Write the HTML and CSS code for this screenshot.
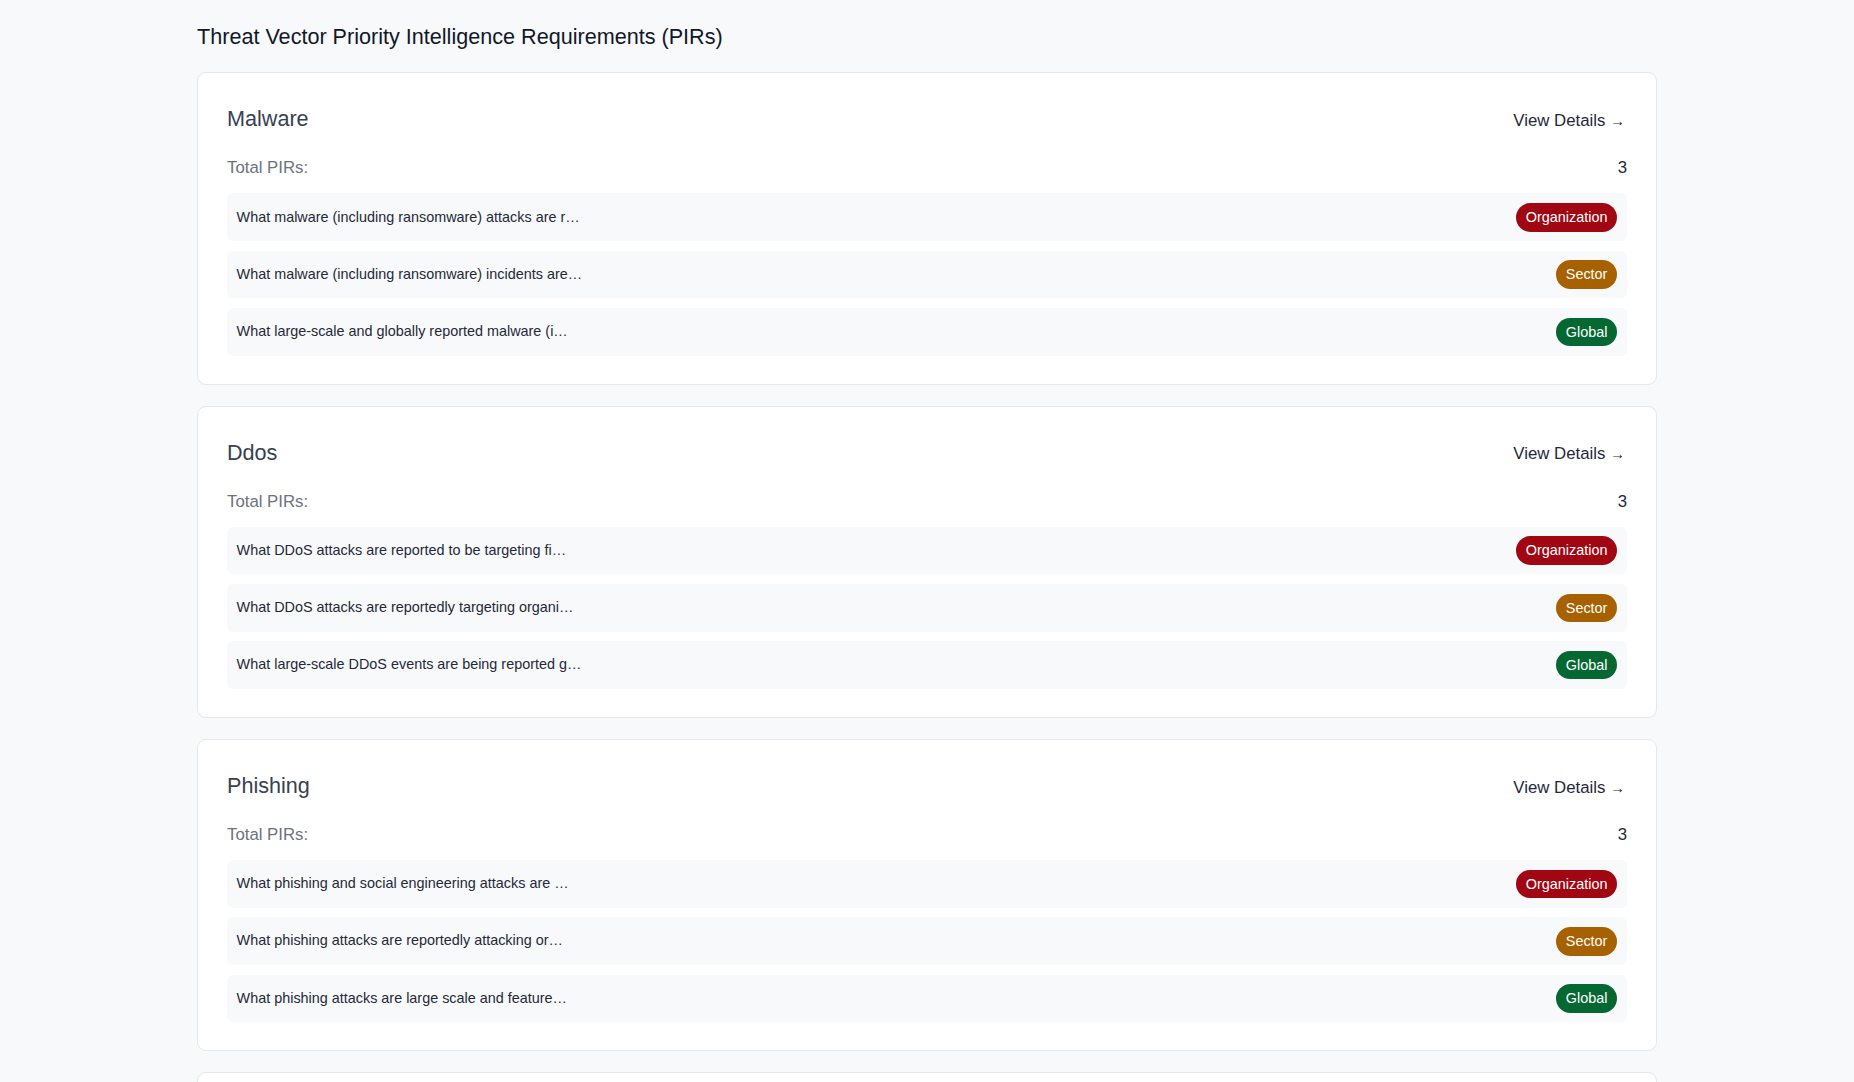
FILE: index.html
```html
<!DOCTYPE html>
<html lang="en">
<head>
  <meta charset="UTF-8" />
  <meta name="viewport" content="width=device-width, initial-scale=1.0"/>
  <title>Threat Vector PIRs</title>
  <link rel="stylesheet" href="styles.css">
</head>
<body>
  <div class="page">
    <h1 class="page-title">Threat Vector Priority Intelligence Requirements (PIRs)</h1>

    <div class="vector-card">
      <div class="vector-header">
        <h2>Malware</h2>
        <a href="#" class="details-link">View Details <span class="arrow">→</span></a>
      </div>
      <div class="total-row">
        <span class="total-label">Total PIRs:</span>
        <span class="total-count">3</span>
      </div>
      <div class="pir-item">
        <span class="pir-text">What malware (including ransomware) attacks are r…</span>
        <span class="badge badge-org">Organization</span>
      </div>
      <div class="pir-item">
        <span class="pir-text">What malware (including ransomware) incidents are…</span>
        <span class="badge badge-sector">Sector</span>
      </div>
      <div class="pir-item">
        <span class="pir-text">What large-scale and globally reported malware (i…</span>
        <span class="badge badge-global">Global</span>
      </div>
    </div>

    <div class="vector-card">
      <div class="vector-header">
        <h2>Ddos</h2>
        <a href="#" class="details-link">View Details <span class="arrow">→</span></a>
      </div>
      <div class="total-row">
        <span class="total-label">Total PIRs:</span>
        <span class="total-count">3</span>
      </div>
      <div class="pir-item">
        <span class="pir-text">What DDoS attacks are reported to be targeting fi…</span>
        <span class="badge badge-org">Organization</span>
      </div>
      <div class="pir-item">
        <span class="pir-text">What DDoS attacks are reportedly targeting organi…</span>
        <span class="badge badge-sector">Sector</span>
      </div>
      <div class="pir-item">
        <span class="pir-text">What large-scale DDoS events are being reported g…</span>
        <span class="badge badge-global">Global</span>
      </div>
    </div>

    <div class="vector-card">
      <div class="vector-header">
        <h2>Phishing</h2>
        <a href="#" class="details-link">View Details <span class="arrow">→</span></a>
      </div>
      <div class="total-row">
        <span class="total-label">Total PIRs:</span>
        <span class="total-count">3</span>
      </div>
      <div class="pir-item">
        <span class="pir-text">What phishing and social engineering attacks are …</span>
        <span class="badge badge-org">Organization</span>
      </div>
      <div class="pir-item">
        <span class="pir-text">What phishing attacks are reportedly attacking or…</span>
        <span class="badge badge-sector">Sector</span>
      </div>
      <div class="pir-item">
        <span class="pir-text">What phishing attacks are large scale and feature…</span>
        <span class="badge badge-global">Global</span>
      </div>
    </div>

    <div class="vector-card">
      <div class="vector-header">
        <h2>Vulnerability</h2>
        <a href="#" class="details-link">View Details <span class="arrow">→</span></a>
      </div>
      <div class="total-row">
        <span class="total-label">Total PIRs:</span>
        <span class="total-count">3</span>
      </div>
      <div class="pir-item">
        <span class="pir-text">What vulnerabilities are being actively exploited…</span>
        <span class="badge badge-org">Organization</span>
      </div>
      <div class="pir-item">
        <span class="pir-text">What vulnerabilities are reportedly targeting org…</span>
        <span class="badge badge-sector">Sector</span>
      </div>
      <div class="pir-item">
        <span class="pir-text">What large-scale vulnerabilities are being report…</span>
        <span class="badge badge-global">Global</span>
      </div>
    </div>
  </div>
</body>
</html>
```

FILE: styles.css
```css
body {
  background-color: #f8f9fb;
  color: #1f2937;
  font-family: "Liberation Sans", Arial, Helvetica, sans-serif;
  line-height: 1.5;
  margin: 0;
}
.page {
  max-width: 1460px;
  margin: 0 auto;
  padding: 21px 0 20px;
}
.page-title {
  font-size: 21.6px;
  font-weight: normal;
  color: #111827;
  margin: 0 0 19px;
}
.vector-card {
  background-color: #fff;
  border: 1px solid #e5e7eb;
  border-radius: 9px;
  padding: 28px 29px;
  margin-bottom: 21px;
}
.vector-header {
  display: flex;
  justify-content: space-between;
  align-items: center;
  padding-top: 2px;
  margin-bottom: 19.5px;
}
.vector-header h2 {
  font-size: 21.6px;
  font-weight: normal;
  color: #374151;
  margin: 0;
}
.details-link {
  font-size: 16.8px;
  color: #1e293b;
  text-decoration: none;
  padding-top: 2px;
  margin-right: 2px;
}
.details-link .arrow {
  font-size: 15px;
}
.total-row {
  display: flex;
  justify-content: space-between;
  font-size: 16.8px;
  margin-bottom: 13px;
}
.total-label {
  color: #6b7280;
}
.total-count {
  color: #1f2937;
}
.pir-item {
  display: flex;
  justify-content: space-between;
  align-items: center;
  background-color: #f8f9fb;
  border-radius: 6px;
  padding: 9.6px;
  margin-bottom: 9.6px;
  font-size: 14.4px;
}
.pir-item:last-child {
  margin-bottom: 0;
}
.pir-text {
  color: #1f2937;
}
.badge {
  color: #fff;
  font-size: 14.4px;
  line-height: 16.5px;
  padding: 6px 10px;
  border-radius: 999px;
}
.badge-org {
  background-color: #a10713;
}
.badge-sector {
  background-color: #a86100;
}
.badge-global {
  background-color: #056832;
}
```
